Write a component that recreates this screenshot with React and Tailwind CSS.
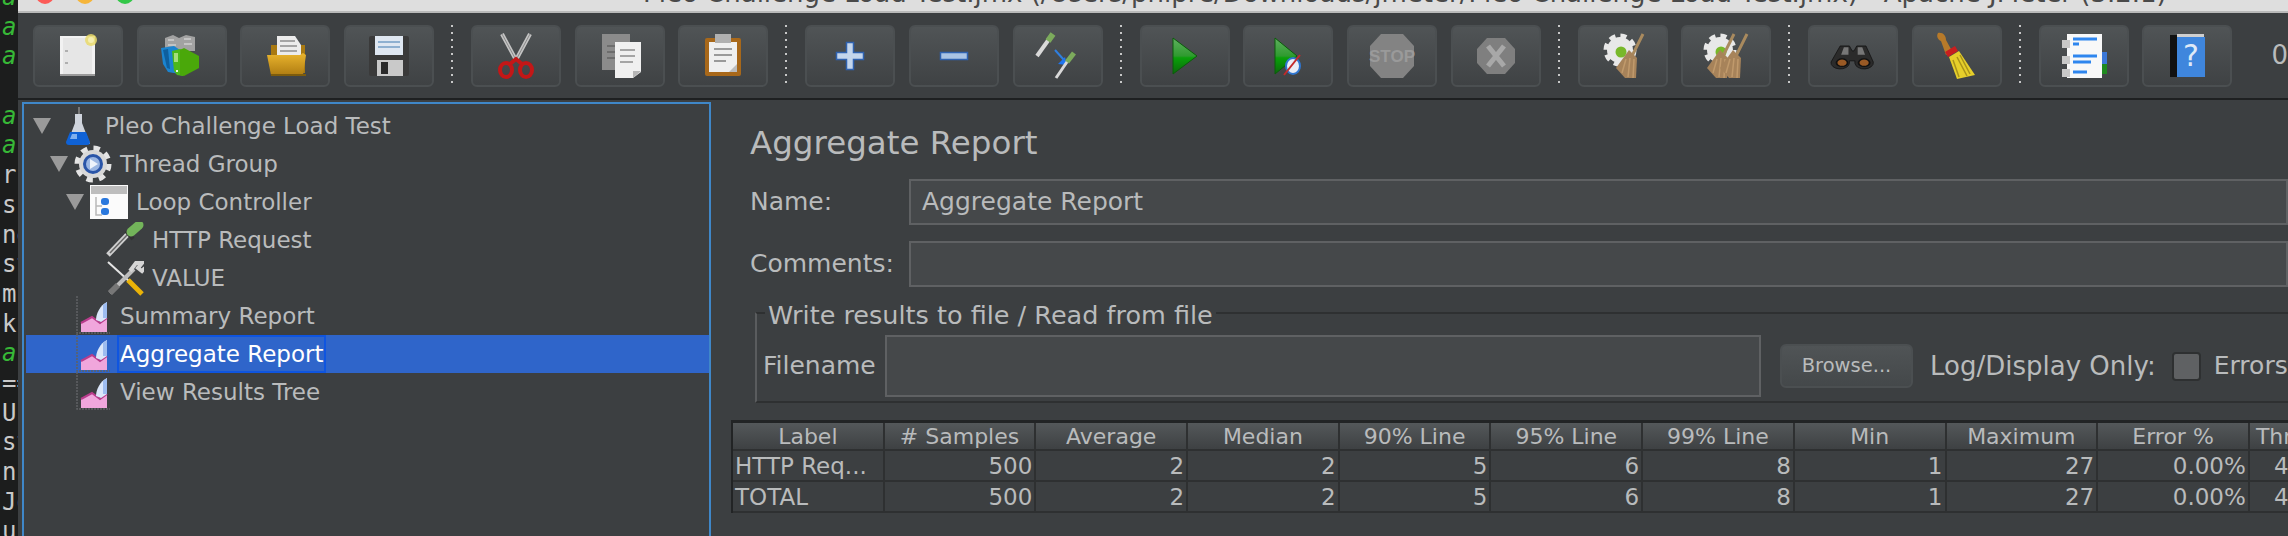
import React from 'react';

const sans = 'font-["DejaVu_Sans",sans-serif]';

// ---- toolbar icons (48x48 viewBox) ----
const NewIcon = () => (
  <svg viewBox="0 0 48 48" className="w-[48px] h-[48px]">
    <rect x="6" y="4" width="35" height="40" fill="#f2f2f2" />
    <rect x="9" y="6" width="29" height="36" fill="#e6e6e6" />
    <rect x="6" y="42" width="35" height="2" fill="#9a9a9a" />
    <rect x="11" y="18" width="3" height="2" fill="#b0b0b0" />
    <rect x="11" y="30" width="3" height="2" fill="#b0b0b0" />
    <circle cx="37" cy="8" r="6" fill="#e9d96a" opacity="0.85" />
    <circle cx="37" cy="8" r="3" fill="#f5eeb0" />
  </svg>
);
const TemplateIcon = () => (
  <svg viewBox="0 0 48 48" className="w-[48px] h-[48px]">
    <path d="M7 6l8 -3 6 3 7 -3 9 2v14H7z" fill="#a2a2a2" />
    <path d="M10 8h6M26 7h7M10 13h8M26 12h8" stroke="#c4c4c4" strokeWidth="2" />
    <path d="M3 16l13 -2 6 4v24l-12 -2 -5 -8z" fill="#1b84cf" />
    <path d="M5 18l5 -1 2 20 -3 -1z" fill="#0e5f9e" />
    <path d="M14 19l8 -2 3 1v26l-6 -1 -3 -4z" fill="#4cb81a" />
    <path d="M22 18l4 -2 15 8v12l-15 8 -4 -1z" fill="#4aa80a" />
    <rect x="16" y="21" width="4" height="9" fill="#a6de7c" />
    <rect x="18" y="38" width="2" height="2" fill="#eaf7de" />
  </svg>
);
const OpenIcon = () => (
  <svg viewBox="0 0 48 48" className="w-[48px] h-[48px]">
    <defs>
      <linearGradient id="fold" x1="0" y1="0" x2="0" y2="1">
        <stop offset="0" stopColor="#eab52e" />
        <stop offset="1" stopColor="#b07d12" />
      </linearGradient>
    </defs>
    <path d="M10 13h34v28H10z" fill="#a97a12" />
    <path d="M16 4h18l6 9v10H16z" fill="#ececec" />
    <path d="M19 9h15M19 14h17M19 19h17" stroke="#a5a5a5" strokeWidth="2" />
    <path d="M6 23h33l3 -2 3 2 -3 20H10z" fill="url(#fold)" />
    <path d="M10 42h35v2H10z" fill="#7d5c0d" />
  </svg>
);
const SaveIcon = () => (
  <svg viewBox="0 0 48 48" className="w-[48px] h-[48px]">
    <rect x="4" y="4" width="40" height="40" rx="2" fill="#3a3a3a" />
    <rect x="10" y="4" width="28" height="19" fill="#dfe7f1" />
    <path d="M13 10h22M13 15h22" stroke="#8fb0d0" strokeWidth="2" />
    <rect x="12" y="28" width="26" height="16" fill="#c9c9c9" />
    <rect x="16" y="30" width="7" height="12" fill="#2a2a2a" />
  </svg>
);
const CutIcon = () => (
  <svg viewBox="0 0 48 48" className="w-[48px] h-[48px]">
    <path d="M10 2l14 26M38 2L24 28" stroke="#c4c4c4" strokeWidth="4" fill="none" />
    <path d="M10 2l14 26M38 2L24 28" stroke="#8a8a8a" strokeWidth="1" fill="none" />
    <ellipse cx="14" cy="38" rx="6" ry="7" fill="none" stroke="#c31717" strokeWidth="4" />
    <ellipse cx="34" cy="38" rx="6" ry="7" fill="none" stroke="#c31717" strokeWidth="4" />
    <path d="M18 32l6 -5 6 5" stroke="#c31717" strokeWidth="4" fill="none" />
  </svg>
);
const CopyIcon = () => (
  <svg viewBox="0 0 48 48" className="w-[48px] h-[48px]">
    <rect x="6" y="2" width="28" height="36" fill="#8b8b8b" />
    <path d="M11 14h10M11 20h10M11 26h10" stroke="#6d6d6d" strokeWidth="2" />
    <path d="M19 10h26v30l-8 6H19z" fill="#f0f0f0" />
    <path d="M37 46v-7h8z" fill="#b5b5b5" />
    <path d="M24 18h15M24 24h15M24 30h13" stroke="#a5a5a5" strokeWidth="2" />
  </svg>
);
const PasteIcon = () => (
  <svg viewBox="0 0 48 48" className="w-[48px] h-[48px]">
    <rect x="6" y="6" width="36" height="38" rx="2" fill="#a8681a" />
    <rect x="10" y="10" width="28" height="30" fill="#efefef" />
    <rect x="16" y="2" width="16" height="9" fill="#b0b0b0" />
    <path d="M15 17h18M15 23h18M15 29h12" stroke="#9a9a9a" strokeWidth="2" />
    <path d="M30 40l8 -8v8z" fill="#bdbdbd" />
  </svg>
);
const PlusIcon = () => (
  <svg viewBox="0 0 48 48" className="w-[48px] h-[48px]">
    <path d="M20.5 10.5h7v10h10v7h-10v10h-7v-10h-10v-7h10z" fill="#c3d5ec" stroke="#2f62b0" strokeWidth="1.5" />
  </svg>
);
const MinusIcon = () => (
  <svg viewBox="0 0 48 48" className="w-[48px] h-[48px]">
    <rect x="10.5" y="20.5" width="27" height="7" fill="#a9c3e4" stroke="#2f62b0" strokeWidth="1.5" />
  </svg>
);
const ToggleIcon = () => (
  <svg viewBox="0 0 48 48" className="w-[48px] h-[48px]">
    <path d="M3 24L18 3" stroke="#d9d9d9" strokeWidth="4" />
    <path d="M14 9l5 -7" stroke="#7cab5c" strokeWidth="6" />
    <path d="M21 18l9 10" stroke="#2f7fe0" strokeWidth="2" />
    <path d="M33 33l-9 -1 7 -7z" fill="#1f75ee" />
    <path d="M22 46l13 -19" stroke="#d9d9d9" strokeWidth="3" />
    <path d="M33 30l7 -9" stroke="#7cab5c" strokeWidth="5" />
  </svg>
);
const PlayIcon = () => (
  <svg viewBox="0 0 48 48" className="w-[48px] h-[48px]">
    <defs>
      <linearGradient id="pg" x1="0" y1="0" x2="0" y2="1">
        <stop offset="0" stopColor="#5fb05f" />
        <stop offset="0.5" stopColor="#2f9a2f" />
        <stop offset="0.55" stopColor="#0aa00a" />
        <stop offset="1" stopColor="#0a6a0a" />
      </linearGradient>
    </defs>
    <path d="M12 6l24 18 -24 18z" fill="url(#pg)" stroke="#0b5c0b" strokeWidth="1" />
  </svg>
);
const PlayNoIcon = () => (
  <svg viewBox="0 0 48 48" className="w-[48px] h-[48px]">
    <path d="M11 6l22 18 -22 18z" fill="url(#pg)" stroke="#0b5c0b" strokeWidth="1" />
    <ellipse cx="29" cy="34" rx="7" ry="8" fill="#e9eef6" stroke="#2f76d0" strokeWidth="2" />
    <path d="M20 43L36 23" stroke="#c32a2a" strokeWidth="2" />
  </svg>
);
const StopIcon = () => (
  <svg viewBox="0 0 48 48" className="w-[48px] h-[48px]">
    <path d="M13 2h22l11 12v20L35 46H13L2 34V14z" fill="#838383" />
    <text x="24" y="30" textAnchor="middle" fontSize="17" fontWeight="700" fill="#9a9a9a" fontFamily="Liberation Sans">STOP</text>
  </svg>
);
const ShutIcon = () => (
  <svg viewBox="0 0 48 48" className="w-[48px] h-[48px]">
    <path d="M15 6h18l10 11v14L33 42H15L5 31V17z" fill="#7f7f7f" />
    <path d="M16 14l16 20M32 14L16 34" stroke="#a8a8a8" strokeWidth="5" />
  </svg>
);
const Gear = ({ x = 21 }) => (
  <g>
    <circle cx={x} cy="18" r="14" fill="none" stroke="#e8e8e8" strokeWidth="5" strokeDasharray="6 5" />
    <circle cx={x} cy="18" r="13" fill="#e8e8e8" />
    <circle cx={x + 1} cy="20" r="5.5" fill="#78b82a" />
  </g>
);
const Broom = ({ x = 0 }) => (
  <g transform={`translate(${x} 0)`}>
    <path d="M44 2L33 24" stroke="#a98a5e" strokeWidth="3" />
    <path d="M30 18l8 8 -1 20H26l-9 -10z" fill="#a7835a" />
    <path d="M27 27l-4 14M31 26l-2 19M35 27l-1 19" stroke="#c09a6c" strokeWidth="1.5" />
  </g>
);
const ClearIcon = () => (
  <svg viewBox="0 0 48 48" className="w-[48px] h-[48px]">
    <Gear />
    <Broom />
  </svg>
);
const ClearAllIcon = () => (
  <svg viewBox="0 0 48 48" className="w-[48px] h-[48px]">
    <Gear x={18} />
    <Broom x={-12} />
    <Broom x={1} />
  </svg>
);
const BinocularsIcon = () => (
  <svg viewBox="0 0 48 48" className="w-[48px] h-[48px]">
    <g transform="translate(2 9) scale(0.92 0.62)">
      <path d="M10 8h10l3 8h2l3 -8h10l8 26a10 10 0 0 1 -20 2v-4h-6v4a10 10 0 0 1 -20 -2z" fill="#2b2b2b" stroke="#111" />
      <path d="M14 10h5v12h-8zM29 10h5l3 12h-8z" fill="#777" />
      <circle cx="12" cy="35" r="6" fill="#9a5a25" stroke="#111" strokeWidth="2" />
      <circle cx="36" cy="35" r="6" fill="#9a5a25" stroke="#111" strokeWidth="2" />
    </g>
  </svg>
);
const SweepIcon = () => (
  <svg viewBox="0 0 48 48" className="w-[48px] h-[48px]">
    <path d="M5 1c5 -1 8 3 8 7l6 11 -6 4 -5 -14C5 8 3 4 5 1z" fill="#b77a2a" />
    <path d="M12 20l10 -6 3 5 -10 6z" fill="#c81f1f" />
    <path d="M16 25l10 -6 16 24 -18 4z" fill="#e6cf2a" />
    <path d="M20 28l6 17M24 25l10 19M27 23l10 19" stroke="#a9931a" strokeWidth="1.5" />
  </svg>
);
const LogIcon = () => (
  <svg viewBox="0 0 48 48" className="w-[48px] h-[48px]">
    <rect x="38" y="20" width="9" height="12" fill="#3c78d8" />
    <rect x="38" y="32" width="9" height="10" fill="#1f8a1f" />
    <rect x="7" y="2" width="35" height="44" fill="#f8f8f8" />
    <path d="M13 7h24M13 12h6M13 24h24M13 30h18M13 40h14" stroke="#2f86ee" strokeWidth="3" />
    <rect x="2" y="8" width="8" height="8" fill="#c8c8c8" />
    <rect x="2" y="24" width="8" height="8" fill="#c8c8c8" />
    <rect x="2" y="37" width="8" height="8" fill="#c8c8c8" />
  </svg>
);
const HelpIcon = () => (
  <svg viewBox="0 0 48 48" className="w-[48px] h-[48px]">
    <rect x="7" y="3" width="34" height="42" fill="#111" />
    <rect x="14" y="2" width="27" height="3" fill="#cfcfcf" />
    <rect x="14" y="5" width="28" height="40" fill="#3f86dd" />
    <text x="28" y="34" textAnchor="middle" fontSize="30" fill="#dfe9f7" fontFamily="DejaVu Sans">?</text>
  </svg>
);

// ---- tree icons ----
const Flask = () => (
  <svg viewBox="0 0 26 40" className="w-[26px] h-[40px] shrink-0">
    <path d="M14 1v8" stroke="#777" strokeWidth="2" />
    <path d="M10 8h7v9l8 21H2l8 -21z" fill="#cfd4dc" />
    <path d="M5 26h16l4 10a3 3 0 0 1 -3 3H4a3 3 0 0 1 -3 -3z" fill="#0f62d6" />
    <path d="M7 28h5v5H5z" fill="#7fb0ee" />
  </svg>
);
const ThreadGear = () => (
  <svg viewBox="0 0 38 38" className="w-[38px] h-[38px] shrink-0">
    <circle cx="19" cy="19" r="15" fill="none" stroke="#e4e4e4" strokeWidth="7" strokeDasharray="6 5.78" />
    <circle cx="19" cy="19" r="14" fill="#d8d8d8" />
    <circle cx="19" cy="19" r="10" fill="#2a55a8" />
    <circle cx="19" cy="19" r="7" fill="#9bb6e2" />
    <path d="M16 14l8 5 -8 5z" fill="#eef3fb" />
  </svg>
);
const LoopIcon = () => (
  <svg viewBox="0 0 38 34" className="w-[38px] h-[34px] shrink-0">
    <rect width="38" height="34" fill="#fbfbfb" />
    <rect x="1" y="1" width="36" height="8" fill="#bdbdbd" />
    <path d="M6 12v18h6M6 21h6" stroke="#b9b9b9" strokeWidth="1.5" fill="none" />
    <rect x="11" y="13" width="8" height="7" rx="3" fill="#2a78dd" />
    <rect x="11" y="23" width="8" height="7" rx="3" fill="#2a78dd" />
  </svg>
);
const Pipette = () => (
  <svg viewBox="0 0 38 36" className="w-[38px] h-[36px] shrink-0">
    <path d="M2 33L23 11" stroke="#cfcfcf" strokeWidth="5" />
    <path d="M4 31L22 12" stroke="#666" strokeWidth="1.5" />
    <path d="M20 9l7 8 " stroke="#333" strokeWidth="4" />
    <path d="M25 10l8 -7" stroke="#73b45a" strokeWidth="9" strokeLinecap="round" />
  </svg>
);
const Tools = () => (
  <svg viewBox="0 0 38 38" className="w-[38px] h-[38px] shrink-0">
    <path d="M2 3l22 20" stroke="#e5e5e5" strokeWidth="2" />
    <path d="M22 21l14 14" stroke="#eab308" strokeWidth="5" />
    <path d="M4 34l24 -24" stroke="#bdbdbd" strokeWidth="4" />
    <path d="M4 34l8 -8" stroke="#777" strokeWidth="6" />
    <path d="M24 12l6 -8h6l-4 5 4 3 3 -3" stroke="#d5d5d5" strokeWidth="4" fill="none" />
  </svg>
);
const ChartIcon = () => (
  <svg viewBox="0 0 34 40" className="w-[34px] h-[40px] shrink-0">
    <path d="M1 0v37h33" stroke="#5f6264" strokeWidth="1.5" strokeDasharray="2 1" fill="none" />
    <path d="M5 36V27l11 -6 8 6 7 -5v14z" fill="#f0a6dc" />
    <path d="M5 27l11 -6 8 6 7 -5" stroke="#b83c8c" strokeWidth="2" fill="none" />
    <path d="M20 24c0 -6 4 -15 11 -18v16l-6 4z" fill="#dbe7fa" />
    <path d="M27 9l4 -3v16h-4z" fill="#9dbcf0" />
  </svg>
);
const Arrow = () => (
  <svg viewBox="0 0 18 16" className="w-[18px] h-[16px] shrink-0">
    <path d="M0 0h18L9 16z" fill="#9a9a9a" />
  </svg>
);

const toolbar = [
  [NewIcon, TemplateIcon, OpenIcon, SaveIcon],
  [CutIcon, CopyIcon, PasteIcon],
  [PlusIcon, MinusIcon, ToggleIcon],
  [PlayIcon, PlayNoIcon, StopIcon, ShutIcon],
  [ClearIcon, ClearAllIcon],
  [BinocularsIcon, SweepIcon],
  [LogIcon, HelpIcon],
];

const TreeRow = ({ pad, arrow, icon: Icon, label, gap, iconGap = 6, selected }) => (
  <div className={`h-[38px] flex items-center ${selected ? 'bg-[#2f65ca] text-white' : ''}`} style={{ paddingLeft: pad }}>
    {arrow && <Arrow />}
    <span style={{ marginLeft: arrow ? iconGap : 0 }} className="flex items-center">
      <Icon />
    </span>
    <span
      style={{ marginLeft: gap }}
      className={`whitespace-nowrap ${selected ? 'border-2 border-[#0f55e0] h-[38px] flex items-center px-[1px]' : ''}`}
    >
      {label}
    </span>
  </div>
);

const columns = ['Label', '# Samples', 'Average', 'Median', '90% Line', '95% Line', '99% Line', 'Min', 'Maximum', 'Error %', 'Throughput'];
const rows = [
  ['HTTP Req...', '500', '2', '2', '5', '6', '8', '1', '27', '0.00%', '4'],
  ['TOTAL', '500', '2', '2', '5', '6', '8', '1', '27', '0.00%', '4'],
];
const term = ['a', 'a', 'a', '', 'a', 'a', 'r', 'si', 'ne', 'st', 'mp', 'k', 'a', '==', 'U', 'st', 'n', 'Jo', 'u'];

export default function App() {
  return (
    <div className={`w-[2288px] h-[536px] flex overflow-hidden bg-[#3c3f41] text-[#b9bbbc] ${sans}`}>
      {/* terminal behind the window */}
      <div className='w-[18px] shrink-0 bg-[#1c1d1d] overflow-hidden font-["DejaVu_Sans_Mono",monospace] text-[24px] text-[#c9c9c9]'>
        <div className="-mt-[17px]">
          {term.map((t, i) => (
            <div key={i} className={`h-[29.7px] leading-[29.7px] pl-[2px] whitespace-nowrap ${t === 'a' ? 'italic text-[#37b837]' : ''}`}>
              {t}
            </div>
          ))}
        </div>
      </div>

      <div className="flex-1 min-w-0 flex flex-col">
        {/* title bar, cut by the top of the picture */}
        <div className="h-[13px] shrink-0 bg-[#dedede] border-b-2 border-[#b9b9b9] relative overflow-hidden">
          <div className="absolute left-[18px] -top-[14px] flex gap-[22px]">
            <div className="w-[18px] h-[18px] rounded-full bg-[#fc5b57]" />
            <div className="w-[18px] h-[18px] rounded-full bg-[#f5b53a]" />
            <div className="w-[18px] h-[18px] rounded-full bg-[#33c748]" />
          </div>
          <div className="absolute left-[625px] -top-[22px] text-[26px] leading-[30px] text-[#4a4a4a] whitespace-nowrap">
            Pleo Challenge Load Test.jmx (/Users/phipre/Downloads/jmeter/Pleo Challenge Load Test.jmx) - Apache JMeter (3.2.1)
          </div>
        </div>

        {/* toolbar */}
        <div className="h-[85px] shrink-0 flex items-center pl-[15px] whitespace-nowrap">
          {toolbar.map((group, g) => (
            <React.Fragment key={g}>
              {g > 0 && (
                <div className="h-[62px] w-[2px] ml-[17px] mr-[18px] bg-[repeating-linear-gradient(to_bottom,#c8c8c8_0,#c8c8c8_2px,transparent_2px,transparent_7px)]" />
              )}
              <div className="flex gap-[13.7px]">
                {group.map((Icon, i) => (
                  <div
                    key={i}
                    className="w-[90px] h-[62px] rounded-[6px] border-2 border-[#4b4f51] bg-gradient-to-b from-[#505456] to-[#3f4244] flex items-center justify-center"
                  >
                    <Icon />
                  </div>
                ))}
              </div>
            </React.Fragment>
          ))}
          <span className="ml-[39px] text-[26px]">0</span>
        </div>
        <div className="h-[2px] shrink-0 bg-[#1e2021]" />

        {/* split */}
        <div className="flex-1 min-h-0 flex pt-[2px]">
          {/* test plan tree */}
          <div className="w-[689px] ml-[4px] shrink-0 border-2 border-[#3f87c8] border-b-0 text-[23px] pt-[3px] pl-[2px] overflow-hidden">
            <TreeRow pad={7} arrow icon={Flask} label="Pleo Challenge Load Test" iconGap={14} gap={14} />
            <TreeRow pad={24} arrow icon={ThreadGear} label="Thread Group" gap={8} />
            <TreeRow pad={40} arrow icon={LoopIcon} label="Loop Controller" gap={8} />
            <TreeRow pad={80} icon={Pipette} label="HTTP Request" gap={8} />
            <TreeRow pad={80} icon={Tools} label="VALUE" gap={8} />
            <TreeRow pad={50} icon={ChartIcon} label="Summary Report" gap={10} />
            <TreeRow pad={50} icon={ChartIcon} label="Aggregate Report" gap={7} selected />
            <TreeRow pad={50} icon={ChartIcon} label="View Results Tree" gap={10} />
          </div>

          {/* aggregate report panel */}
          <div className="flex-1 min-w-0 overflow-hidden pl-[20px] text-[25px]">
            <div className="pl-[19px] pt-[19px] h-[77px] text-[32.5px] leading-[44px] whitespace-nowrap">Aggregate Report</div>
            <div className="flex items-center pl-[19px] whitespace-nowrap">
              <span className="w-[159px] shrink-0">Name:</span>
              <div className="flex-1 h-[46px] bg-[#45484a] border-2 border-[#5f6163] pl-[11px] flex items-center">Aggregate Report</div>
            </div>
            <div className="flex items-center pl-[19px] mt-[16px] whitespace-nowrap">
              <span className="w-[159px] shrink-0">Comments:</span>
              <div className="flex-1 h-[46px] bg-[#45484a] border-2 border-[#5f6163]" />
            </div>

            {/* file group */}
            <div className="relative ml-[24px] mt-[25px] h-[91px] border-2 border-r-0 border-t-[#2e3031] border-l-[#5a5c5e] border-b-[#2e3031]">
              <div className="absolute left-[8px] -top-[16px] bg-[#3c3f41] px-[3px] h-[34px] leading-[34px] text-[25.5px] whitespace-nowrap">Write results to file / Read from file</div>
              <div className="flex items-center pt-[21px] pl-[6px] whitespace-nowrap">
                <span className="w-[122px] shrink-0">Filename</span>
                <div className="w-[876px] h-[62px] shrink-0 bg-[#45484a] border-2 border-[#5f6163]" />
                <div className="w-[133px] h-[44px] shrink-0 ml-[19px] rounded-[6px] border-2 border-[#4b4f51] bg-gradient-to-b from-[#505456] to-[#44484a] text-[19.5px] flex items-center justify-center">
                  Browse...
                </div>
                <span className="ml-[17px] text-[26px]">Log/Display Only:</span>
                <div className="w-[29px] h-[29px] shrink-0 ml-[16px] rounded-[4px] border-2 border-[#2e3031] bg-[#5f6163]" />
                <span className="ml-[13px] text-[25px]">Errors</span>
              </div>
            </div>

            {/* results table */}
            <div className="mt-[17px] border-t-[3px] border-l-2 border-[#222425] text-[23px] whitespace-nowrap">
              <div className="flex h-[28px] bg-gradient-to-b from-[#54585a] to-[#3e4143] border-b-2 border-[#2e3031] text-[22px]">
                {columns.map((c, i) => (
                  <div key={i} className="w-[151.7px] shrink-0 border-r-2 border-[#2e3031] text-center leading-[28px] overflow-hidden">
                    {i === 10 ? <span className="block text-left pl-[6px]">{c}</span> : c}
                  </div>
                ))}
              </div>
              {rows.map((r, ri) => (
                <div key={ri} className="flex h-[31px] border-b-2 border-[#2e3031]">
                  {r.map((v, i) => (
                    <div key={i} className={`w-[151.7px] shrink-0 border-r-2 border-[#2e3031] leading-[31px] overflow-hidden px-[2px] ${i === 0 ? 'text-left' : i === 10 ? 'text-left pl-[24px]' : 'text-right'}`}>
                      {v}
                    </div>
                  ))}
                </div>
              ))}
            </div>
          </div>
        </div>
      </div>
    </div>
  );
}
